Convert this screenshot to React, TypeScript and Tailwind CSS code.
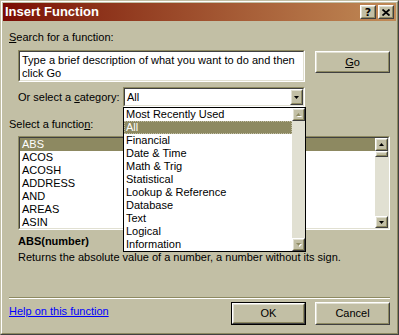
import React from 'react';

// Windows classic "Brick" palette
// face #c2bfa5, light #e1e0d2, shadow #8d8961, dark #404040

const categories = [
  'Most Recently Used',
  'All',
  'Financial',
  'Date & Time',
  'Math & Trig',
  'Statistical',
  'Lookup & Reference',
  'Database',
  'Text',
  'Logical',
  'Information',
];

const functions = ['ABS', 'ACOS', 'ACOSH', 'ADDRESS', 'AND', 'AREAS', 'ASIN'];

function Raised({ className = '', children }: { className?: string; children?: React.ReactNode }) {
  return (
    <div
      className={`border border-t-white border-l-white border-r-[#404040] border-b-[#404040] bg-[#c2bfa5] ${className}`}
    >
      <div className="w-full h-full border border-t-[#e1e0d2] border-l-[#e1e0d2] border-r-[#8d8961] border-b-[#8d8961] flex items-center justify-center">
        {children}
      </div>
    </div>
  );
}

function Sunken({ className = '', children }: { className?: string; children?: React.ReactNode }) {
  return (
    <div
      className={`border border-t-[#8d8961] border-l-[#8d8961] border-r-white border-b-white ${className}`}
    >
      <div className="w-full h-full border border-t-[#404040] border-l-[#404040] border-r-[#e1e0d2] border-b-[#e1e0d2] bg-white flex overflow-hidden">
        {children}
      </div>
    </div>
  );
}

function Arrow({ up = false, disabled = false }: { up?: boolean; disabled?: boolean }) {
  const pts = up ? '2.5,0 5,3 0,3' : '0,0 5,0 2.5,3';
  if (disabled) {
    return (
      <svg width="6" height="4" viewBox="0 0 6 4">
        <polygon points={pts} fill="#ffffff" transform="translate(1,1)" />
        <polygon points={pts} fill="#8d8961" />
      </svg>
    );
  }
  return (
    <svg width="5" height="3" viewBox="0 0 5 3">
      <polygon points={pts} fill="#000000" />
    </svg>
  );
}

function Button({
  label,
  underline,
  isDefault = false,
  className = '',
}: {
  label: string;
  underline?: number;
  isDefault?: boolean;
  className?: string;
}) {
  const text =
    underline === undefined ? (
      label
    ) : (
      <span>
        {label.slice(0, underline)}
        <span className="underline">{label[underline]}</span>
        {label.slice(underline + 1)}
      </span>
    );
  if (isDefault) {
    return (
      <div className={`border border-black ${className}`}>
        <Raised className="w-full h-full">{text}</Raised>
      </div>
    );
  }
  return <Raised className={className}>{text}</Raised>;
}

export default function App() {
  return (
    <div className="w-[399px] h-[335px] font-['Liberation_Sans',Arial,sans-serif] text-[11px] leading-[13px] text-black">
      <div className="h-full border border-t-[#c2bfa5] border-l-[#c2bfa5] border-r-[#404040] border-b-[#404040]">
        <div className="h-full border border-t-white border-l-white border-r-[#8d8961] border-b-[#8d8961] bg-[#c2bfa5] p-px flex flex-col">
          {/* Title bar */}
          <div className="h-[18px] shrink-0 flex items-center justify-between bg-linear-to-r from-[#7a0a04] to-[#c08a56] pl-[2px] pr-[2px]">
            <span className="text-white font-bold text-[13px] leading-[16px]">Insert Function</span>
            <div className="flex gap-[2px]">
              <Raised className="w-[16px] h-[14px]">
                <span className="font-bold text-[11px] leading-[11px] font-['DejaVu_Sans',sans-serif]">?</span>
              </Raised>
              <Raised className="w-[16px] h-[14px]">
                <svg width="8" height="7" viewBox="0 0 8 7">
                  <path d="M0.5 0.5 L7.5 6.5 M7.5 0.5 L0.5 6.5" stroke="#000" strokeWidth="1.8" />
                </svg>
              </Raised>
            </div>
          </div>

          {/* Body */}
          <div className="flex-1 px-[6px] flex flex-col">
            <div className="mt-[10px]">
              <span className="underline">S</span>earch for a function:
            </div>

            <div className="mt-[6px] ml-[9px] flex">
              <Sunken className="w-[287px] h-[32px]">
                <div className="pl-[2px] pt-[2px] pr-[4px]">
                  Type a brief description of what you want to do and then click Go
                </div>
              </Sunken>
              <Button label="Go" underline={0} className="ml-[10px] mt-[1px] w-[75px] h-[22px]" />
            </div>

            <div className="mt-[5px] ml-[9px] flex items-center">
              <div className="w-[105px]">
                Or select a <span className="underline">c</span>ategory:
              </div>
              <div className="relative">
                <Sunken className="w-[182px] h-[20px]">
                  <div className="flex-1 pl-[2px] flex items-center">All</div>
                  <Raised className="w-[13px] h-full">
                    <Arrow />
                  </Raised>
                </Sunken>
                {/* open dropdown */}
                <div className="absolute left-0 top-full w-[183px] h-[145px] border border-black bg-white flex z-10">
                  <div className="flex-1 flex flex-col">
                    {categories.map((c) => (
                      <div
                        key={c}
                        className={`h-[13px] pl-[2px] whitespace-nowrap ${
                          c === 'All'
                            ? 'bg-[#8d8961] text-white outline-1 outline-dotted outline-[#c2bfa5] -outline-offset-1'
                            : ''
                        }`}
                      >
                        {c}
                      </div>
                    ))}
                  </div>
                  <div className="w-[13px] bg-[#e1e0d2] flex flex-col justify-between">
                    <Raised className="w-[13px] h-[13px]">
                      <Arrow up disabled />
                    </Raised>
                    <Raised className="w-[13px] h-[13px]">
                      <Arrow disabled />
                    </Raised>
                  </div>
                </div>
              </div>
            </div>

            <div className="mt-[11px]">
              Select a functio<span className="underline">n</span>:
            </div>

            <Sunken className="mt-[5px] ml-[9px] w-[372px] h-[94px] shrink-0">
              <div className="flex-1 flex flex-col">
                {functions.map((f) => (
                  <div
                    key={f}
                    className={`h-[13px] shrink-0 pl-[2px] ${f === 'ABS' ? 'bg-[#8d8961] text-white' : ''}`}
                  >
                    {f}
                  </div>
                ))}
              </div>
              <div className="w-[13px] bg-[#e1e0d2] flex flex-col">
                <Raised className="w-[13px] h-[13px] shrink-0">
                  <Arrow up />
                </Raised>
                <Raised className="w-[13px] h-[6px] shrink-0" />
                <div className="flex-1" />
                <Raised className="w-[13px] h-[12px] shrink-0">
                  <Arrow />
                </Raised>
              </div>
            </Sunken>

            <div className="mt-[5px] ml-[9px] font-bold">ABS(number)</div>
            <div className="mt-[3px] ml-[9px]">
              Returns the absolute value of a number, a number without its sign.
            </div>

            <div className="mt-[33px] h-[2px] border-t border-t-[#8d8961] border-b border-b-white" />

            <div className="mt-[3px] flex items-start">
              <span className="mt-[3px] text-[#0000ff] underline">Help on this function</span>
              <div className="ml-auto flex gap-[9px]">
                <Button label="OK" isDefault className="w-[75px] h-[23px]" />
                <Button label="Cancel" className="w-[75px] h-[23px]" />
              </div>
            </div>
          </div>
        </div>
      </div>
    </div>
  );
}
